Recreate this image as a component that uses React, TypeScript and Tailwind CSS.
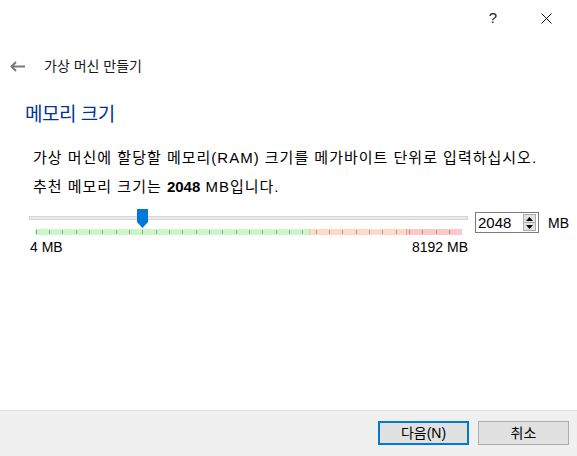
const FONT = "font-['Liberation_Sans','Noto_Sans_CJK_KR',sans-serif]";

function TickBand() {
  const ticks: number[] = [];
  for (let i = 0; i < 32; i++) ticks.push(0.7 + i * 13.33);
  return (
    <svg width="427" height="6" viewBox="0 0 427 6" className="block">
      <rect x="0" y="0" width="274" height="6" fill="#c8f8c8" />
      <rect x="274" y="0" width="97" height="6" fill="#ffd8c6" />
      <rect x="371" y="0" width="56" height="6" fill="#ffc8c8" />
      <rect x="274" y="0" width="1" height="6" fill="#f2c4a8" />
      <rect x="371" y="0" width="1" height="6" fill="#f4a0a0" />
      {ticks.map((x, i) => (
        <rect key={i} x={Math.round(x)} y="1" width="1" height="4" fill="#a09a94" />
      ))}
    </svg>
  );
}

function Thumb() {
  return (
    <svg width="11" height="19" viewBox="0 0 11 19" className="absolute left-[107px] top-[-8px]">
      <path d="M0 0 H11 V13 L5.5 19 L0 13 Z" fill="#0078d7" />
    </svg>
  );
}

function SpinBox() {
  return (
    <div className="mt-[5px] flex h-[21px] w-[64px] items-center border border-[#7a7a7a] bg-white">
      <span className="flex-1 pl-[2px] text-[15px] leading-[19px] text-black">2048</span>
      <div className="mr-[2px] flex h-[17px] w-[13px] flex-col border border-[#adadad] bg-[#e1e1e1]">
        <div className="flex flex-1 items-center justify-center">
          <svg width="7" height="4" viewBox="0 0 7 4"><path d="M3.5 0 L7 4 H0 Z" fill="#000" /></svg>
        </div>
        <div className="h-px bg-[#adadad]" />
        <div className="flex flex-1 items-center justify-center">
          <svg width="7" height="4" viewBox="0 0 7 4"><path d="M0 0 H7 L3.5 4 Z" fill="#000" /></svg>
        </div>
      </div>
    </div>
  );
}

export default function App() {
  return (
    <div className={`flex h-[456px] w-[577px] flex-col bg-white text-black ${FONT}`}>
      {/* title bar */}
      <div className="flex h-[36px] items-center justify-end">
        <span className="mr-[44px] text-[15px] text-[#222]">?</span>
        <svg width="11" height="11" viewBox="0 0 11 11" className="mr-[25px] mt-[1px]">
          <path d="M0.5 0.5 L10.5 10.5 M10.5 0.5 L0.5 10.5" stroke="#111" strokeWidth="1" />
        </svg>
      </div>

      {/* wizard header */}
      <div className="flex h-[60px] items-center pl-[10px]">
        <svg width="15" height="11" viewBox="0 0 15 11" className="mr-[19px]">
          <path d="M6 1 L1.5 5.5 L6 10 M1.5 5.5 H15" stroke="#7a7a7a" strokeWidth="2" fill="none" />
        </svg>
        <span className="text-[14px] text-[#1a1a1a]">가상 머신 만들기</span>
      </div>

      {/* page body */}
      <div className="flex-1 pl-[25px]">
        <h1 className="h-[38px] text-[19px] leading-[38px] tracking-[-0.5px] text-[#003399]">메모리 크기</h1>
        <div className="mt-[9px] pl-[8px] text-[15px] tracking-[1px]">
          <p className="h-[29px] leading-[29px]">가상 머신에 할당할 메모리(RAM) 크기를 메가바이트 단위로 입력하십시오.</p>
          <p className="h-[29px] leading-[29px]">
            추천 메모리 크기는 <b className="tracking-normal">2048</b> MB입니다.
          </p>
        </div>

        <div className="mt-[6px] flex items-start pl-[4px]">
          <div className="flex w-[439px] flex-col pt-[9px]">
            <div className="relative h-[4px] border border-[#d6d6d6] bg-[#e7eaea]">
              <Thumb />
            </div>
            <div className="ml-[6px] mt-[9px]">
              <TickBand />
            </div>
            <div className="mt-[4px] flex h-[16px] justify-between pl-[1px] text-[14px] leading-[16px]">
              <span>4 MB</span>
              <span>8192 MB</span>
            </div>
          </div>
          <div className="ml-[7px]">
            <SpinBox />
          </div>
          <span className="ml-[9px] mt-[7px] text-[14px] leading-[18px]">MB</span>
        </div>
      </div>

      {/* footer */}
      <div className="flex h-[46px] justify-end gap-[9px] border-t border-[#dfdfdf] bg-[#f0f0f0] pr-[8px] pt-[10px]">
        <button className="h-[24px] w-[91px] border-2 border-[#0078d7] bg-[#e1e1e1] text-[14px] leading-[18px]">
          다음(N)
        </button>
        <button className="h-[24px] w-[91px] border border-[#adadad] bg-[#e1e1e1] text-[14px] leading-[18px]">
          취소
        </button>
      </div>
    </div>
  );
}
